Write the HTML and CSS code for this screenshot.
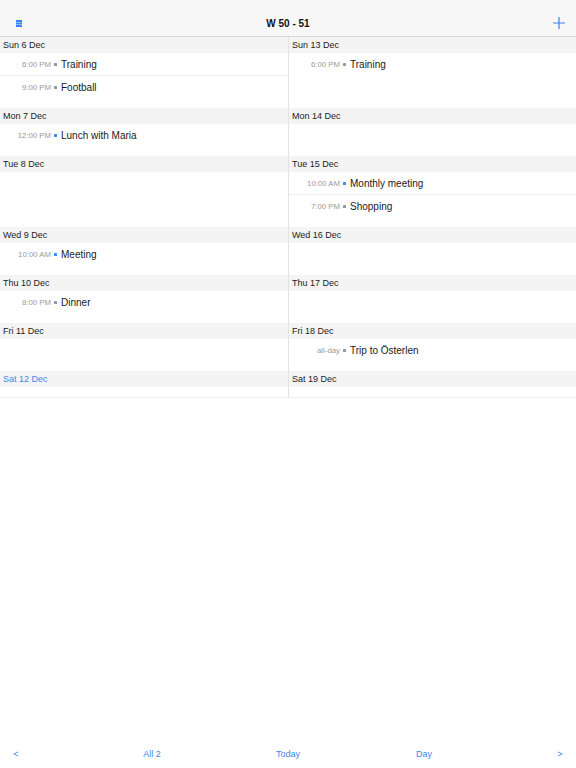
FILE: index.html
```html
<!DOCTYPE html>
<html>
<head>
<meta charset="utf-8">
<link rel="stylesheet" href="styles.css">
</head>
<body>
<div class="app">
  <header class="nav">
    <span class="nav-btn menu">
      <svg width="6" height="7" viewBox="0 0 6 7"><rect x="0" y="0" width="6" height="2" fill="#3b82f0"/><rect x="0" y="2.5" width="6" height="2" fill="#3b82f0"/><rect x="0" y="5" width="6" height="2" fill="#3b82f0"/></svg>
    </span>
    <span class="title">W 50 - 51</span>
    <span class="nav-btn add">
      <svg width="12" height="12" viewBox="0 0 12 12"><path d="M6 0V12M0 6H12" stroke="#3b82f0" stroke-width="1.2"/></svg>
    </span>
  </header>

  <main class="weeks">
    <section class="day left">
      <div class="day-head">Sun 6 Dec</div>
      <div class="events">
        <div class="event"><span class="time">6:00 PM</span><span class="dot gray"></span><span class="name">Training</span></div>
        <div class="event"><span class="time">9:00 PM</span><span class="dot gray"></span><span class="name">Football</span></div>
      </div>
    </section>
    <section class="day">
      <div class="day-head">Sun 13 Dec</div>
      <div class="events">
        <div class="event"><span class="time">6:00 PM</span><span class="dot gray"></span><span class="name">Training</span></div>
      </div>
    </section>

    <section class="day left">
      <div class="day-head">Mon 7 Dec</div>
      <div class="events">
        <div class="event"><span class="time">12:00 PM</span><span class="dot blue"></span><span class="name">Lunch with Maria</span></div>
      </div>
    </section>
    <section class="day">
      <div class="day-head">Mon 14 Dec</div>
      <div class="events"></div>
    </section>

    <section class="day left">
      <div class="day-head">Tue 8 Dec</div>
      <div class="events"></div>
    </section>
    <section class="day">
      <div class="day-head">Tue 15 Dec</div>
      <div class="events">
        <div class="event"><span class="time">10:00 AM</span><span class="dot blue"></span><span class="name">Monthly meeting</span></div>
        <div class="event"><span class="time">7:00 PM</span><span class="dot gray"></span><span class="name">Shopping</span></div>
      </div>
    </section>

    <section class="day left">
      <div class="day-head">Wed 9 Dec</div>
      <div class="events">
        <div class="event"><span class="time">10:00 AM</span><span class="dot blue"></span><span class="name">Meeting</span></div>
      </div>
    </section>
    <section class="day">
      <div class="day-head">Wed 16 Dec</div>
      <div class="events"></div>
    </section>

    <section class="day left">
      <div class="day-head">Thu 10 Dec</div>
      <div class="events">
        <div class="event"><span class="time">8:00 PM</span><span class="dot gray"></span><span class="name">Dinner</span></div>
      </div>
    </section>
    <section class="day">
      <div class="day-head">Thu 17 Dec</div>
      <div class="events"></div>
    </section>

    <section class="day left">
      <div class="day-head">Fri 11 Dec</div>
      <div class="events"></div>
    </section>
    <section class="day">
      <div class="day-head">Fri 18 Dec</div>
      <div class="events">
        <div class="event"><span class="time">all-day</span><span class="dot gray"></span><span class="name">Trip to Österlen</span></div>
      </div>
    </section>

    <section class="day left">
      <div class="day-head today">Sat 12 Dec</div>
      <div class="events"></div>
    </section>
    <section class="day">
      <div class="day-head">Sat 19 Dec</div>
      <div class="events"></div>
    </section>
  </main>

  <div class="spacer"></div>

  <footer class="toolbar">
    <span class="tool t-prev">&lt;</span>
    <span class="tool t-all">All 2</span>
    <span class="tool t-today">Today</span>
    <span class="tool t-day">Day</span>
    <span class="tool t-next">&gt;</span>
  </footer>
</div>
</body>
</html>
```

FILE: styles.css
```css
* { box-sizing: border-box; }
html, body {
  margin: 0;
  padding: 0;
  height: 100%;
  background: #ffffff;
  font-family: "Liberation Sans", Arial, sans-serif;
  color: #1e1e1e;
  overflow: hidden;
}
.app {
  display: flex;
  flex-direction: column;
  height: 768px;
  width: 576px;
}
.nav {
  height: 37px;
  padding-top: 10px;
  background: #f7f7f7;
  border-bottom: 1px solid #d6d6d6;
  display: grid;
  grid-template-columns: 1fr auto 1fr;
  align-items: center;
}
.nav-btn {
  display: flex;
  align-items: center;
}
.menu {
  padding-left: 16px;
  justify-self: start;
  padding-top: 1px;
}
.add {
  justify-self: end;
  padding-right: 11px;
}
.title {
  font-weight: bold;
  font-size: 10px;
  color: #111;
}
.weeks {
  display: grid;
  grid-template-columns: 289px 287px;
  border-bottom: 1px solid #efefef;
}
.day {
  display: flex;
  flex-direction: column;
}
.day.left {
  border-right: 1px solid #e3e3e3;
}
.day-head {
  height: 16px;
  background: #f4f4f4;
  font-size: 9px;
  line-height: 16px;
  padding-left: 3px;
  color: #222;
}
.day-head.today {
  color: #3a86ef;
}
.events {
  display: flex;
  flex-direction: column;
  padding-bottom: 10px;
}
.event {
  height: 22px;
  display: flex;
  align-items: center;
}
.event + .event {
  border-top: 1px solid #f0f0f0;
  height: 23px;
}
.time {
  width: 51px;
  text-align: right;
  font-size: 7.8px;
  color: #9a9a9a;
}
.dot {
  width: 3px;
  height: 3px;
  margin: 1px 4px 0 3px;
  border-radius: 0.6px;
}
.dot.gray { background: #8d99a8; }
.dot.blue { background: #3a8ef0; }
.name {
  font-size: 10px;
  color: #1a1a1a;
}
.spacer { flex: 1; }
.toolbar {
  height: 30px;
  display: grid;
  grid-template-columns: 32px 1fr 136px 136px 136px 1fr 32px;
  align-items: center;
  padding-top: 1px;
}
.tool {
  text-align: center;
  font-size: 9px;
  color: #3a86ef;
}
.t-prev { grid-column: 1; }
.t-all { grid-column: 3; }
.t-today { grid-column: 4; }
.t-day { grid-column: 5; }
.t-next { grid-column: 7; }
```
